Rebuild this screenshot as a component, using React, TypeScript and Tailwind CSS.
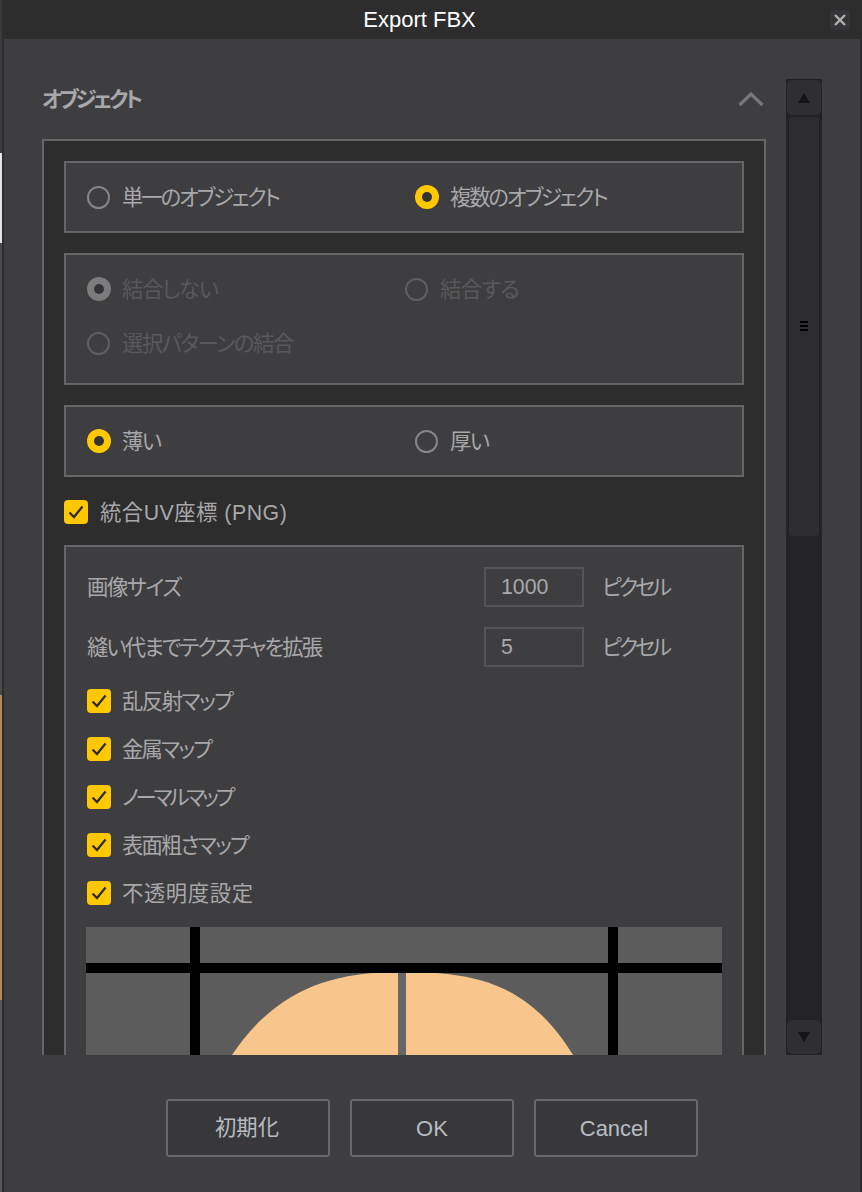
import React from "react";

const font = { fontFamily: '"Liberation Sans","Noto Sans CJK JP",sans-serif' };
const jp = "text-[21.33px] leading-[22px] pt-[2px] [font-feature-settings:'palt'] whitespace-nowrap";

function Radio({ on, dim, label, track, gap = "gap-[11px]" }: { on?: boolean; dim?: boolean; label: string; track: string; gap?: string }) {
  const ring = dim ? "border-[#5e5e60]" : "border-[#858587]";
  return (
    <div className={`flex items-center ${on ? gap : "gap-[12px]"}`}>
      {on ? (
        <span
          className={`w-[24px] h-[24px] rounded-full flex items-center justify-center ${dim ? "bg-[#7c7c7c]" : "bg-[#ffc800]"}`}
        >
          <span className="w-[10px] h-[10px] rounded-full bg-[#333335]" />
        </span>
      ) : (
        <span className={`w-[23px] h-[23px] rounded-full border-2 ${ring}`} />
      )}
      <span className={`${jp} ${track} ${dim ? "text-[#59595b]" : "text-[#a8a8aa]"}`}>{label}</span>
    </div>
  );
}

function Check({ label, track, gap = "gap-[11px]" }: { label: string; track: string; gap?: string }) {
  return (
    <div className={`flex items-center ${gap}`}>
      <span className="w-[24px] h-[24px] rounded-[4px] bg-[#ffc800] flex items-center justify-center shrink-0">
        <svg width="16" height="14" viewBox="0 0 16 14" fill="none">
          <path d="M1.5 7.5 L6 12 L14.5 1.5" stroke="#2b2b2b" strokeWidth="2.2" />
        </svg>
      </span>
      <span className={`${jp} ${track} text-[#a8a8aa]`}>{label}</span>
    </div>
  );
}

function Card({ children, className = "" }: { children: React.ReactNode; className?: string }) {
  return <div className={`border-2 border-[#666668] bg-[#3e3e40] ${className}`}>{children}</div>;
}

function SizeRow({ label, value, track }: { label: string; value: string; track: string }) {
  return (
    <div className="flex items-center h-[40px]">
      <span className={`w-[397px] ${jp} ${track} text-[#a8a8aa]`}>{label}</span>
      <div className="w-[100px] h-[40px] border-2 border-[#555557] flex items-center pl-[15px] pt-[2px] text-[21.33px] text-[#a8a8aa]">
        {value}
      </div>
      <span className={`ml-[18px] ${jp} tracking-[-3.1px] text-[#a8a8aa]`}>ピクセル</span>
    </div>
  );
}

function Btn({ label, size }: { label: string; size: string }) {
  return (
    <button className={`w-[164px] h-[58px] border-2 border-[#69696b] rounded-[3px] bg-[#38383a] ${size} text-[#b9bcc2]`}>
      {label}
    </button>
  );
}

export default function App() {
  return (
    <div className="w-[862px] h-[1192px] flex overflow-hidden bg-[#2d2d2d]" style={font}>
      <div className="w-[2px] flex flex-col shrink-0">
        <div className="h-[153px] bg-[#3a3a3a]" />
        <div className="h-[90px] bg-[#e4e4e4]" />
        <div className="h-[452px] bg-[#4a4a4a]" />
        <div className="h-[305px] bg-[#b08a5c]" />
        <div className="flex-1 bg-[#59595b]" />
      </div>
      <div className="flex-1 flex flex-col min-w-0">
        <div className="h-[39px] bg-[#2d2d2d] flex items-center shrink-0 relative">
          <div className="flex-1 pl-[8px] text-center text-white text-[22px] leading-[39px]">Export FBX</div>
          <div className="w-[22px] h-[22px] mr-[11px] rounded-[3px] border border-[#2a2a2c] bg-[#353537] flex items-center justify-center">
            <svg width="14" height="14" viewBox="0 0 14 14">
              <path d="M2 2 L12 12 M12 2 L2 12" stroke="#b0b0b0" strokeWidth="2.4" />
            </svg>
          </div>
        </div>
        <div className="flex-1 flex min-h-0 ml-[2px] mr-[2px] bg-[#3e3e40]">
          <div className="flex-1 flex flex-col min-w-0">
            <div className="flex-1 flex min-h-0">
              <div className="w-[724px] ml-[38px] flex flex-col">
                <div className="h-[100px] flex items-center justify-between shrink-0 pt-[20px]">
                  <span className="text-[21.33px] font-bold pt-[3px] text-[#a8a8aa] tracking-[-3.15px] [font-feature-settings:'palt']">オブジェクト</span>
                  <svg width="28" height="18" viewBox="0 0 28 18" className="mr-[1px]">
                    <path d="M2.5 15 L14 4 L25.5 15" fill="none" stroke="#77777a" strokeWidth="3.2" />
                  </svg>
                </div>
                <div className="flex-1 min-h-0 overflow-hidden border-x-2 border-t-2 border-[#666668] bg-[#2d2d2d] px-[20px] pt-[20px] flex flex-col">
                  <Card className="h-[72px] shrink-0 flex items-center pl-[21px]">
                    <div className="w-[328px]"><Radio label="単一のオブジェクト" track="tracking-[-2.08px]" /></div>
                    <Radio on label="複数のオブジェクト" track="tracking-[-2.1px]" />
                  </Card>
                  <Card className="h-[132px] shrink-0 mt-[20px] pl-[21px] pt-[22px] flex flex-col gap-[30px]">
                    <div className="flex items-center">
                      <div className="w-[318px]"><Radio on dim label="結合しない" track="tracking-[-1.2px]" /></div>
                      <Radio dim label="結合する" track="tracking-[-0.5px]" />
                    </div>
                    <Radio dim label="選択パターンの結合" track="tracking-[-1.4px]" />
                  </Card>
                  <Card className="h-[72px] shrink-0 mt-[20px] flex items-center pl-[21px]">
                    <div className="w-[328px]"><Radio on label="薄い" track="tracking-[-1.5px]" /></div>
                    <Radio label="厚い" track="tracking-[-1.5px]" />
                  </Card>
                  <div className="mt-[23px] mb-[21px] shrink-0">
                    <Check gap="gap-[12px]" label="統合UV座標 (PNG)" track="tracking-[0.5px]" />
                  </div>
                  <div className="border-x-2 border-t-2 border-[#666668] bg-[#3e3e40] pl-[21px] pr-[20px] pt-[20px] flex-1 min-h-0 flex flex-col">
                    <SizeRow label="画像サイズ" value="1000" track="tracking-[-1.4px]" />
                    <div className="mt-[20px]"><SizeRow label="縫い代までテクスチャを拡張" value="5" track="tracking-[-1.85px]" /></div>
                    <div className="mt-[22px] flex flex-col gap-[24px]">
                      <Check label="乱反射マップ" track="tracking-[-1.5px]" />
                      <Check label="金属マップ" track="tracking-[-1.8px]" />
                      <Check label="ノーマルマップ" track="tracking-[-3.15px]" />
                      <Check label="表面粗さマップ" track="tracking-[-1.8px]" />
                      <Check label="不透明度設定" track="tracking-[0.6px]" />
                    </div>
                    <svg width="636" height="128" viewBox="0 0 636 128" className="mt-[22px] -ml-[1px] shrink-0 block">
                      <rect width="636" height="128" fill="#5c5c5c" />
                      <path d="M146 128 C185 70 235 45 312 45 L312 128 Z" fill="#f8c58c" />
                      <path d="M320 45 C395 45 445 60 487 128 L320 128 Z" fill="#f8c58c" />
                      <rect x="312" y="45" width="8" height="83" fill="#666668" />
                      <rect x="0" y="36" width="636" height="10" fill="#000" />
                      <rect x="104" y="0" width="10" height="128" fill="#000" />
                      <rect x="522" y="0" width="10" height="128" fill="#000" />
                    </svg>
                  </div>
                </div>
              </div>
              <div className="w-[36px] ml-[20px] mt-[40px] bg-[#232325] flex flex-col items-center shrink-0">
                <div className="w-[34px] h-[35px] mt-[1px] rounded-[5px] bg-[#2f2f31] flex items-center justify-center shrink-0">
                  <svg width="12" height="10" viewBox="0 0 12 10"><path d="M6 0 L12 10 L0 10 Z" fill="#141416" /></svg>
                </div>
                <div className="w-[30px] h-[419px] mt-[2px] rounded-[2px] bg-[#2d2d2f] flex justify-center pt-[204px] shrink-0">
                  <div className="w-[8px] h-[12px] flex flex-col gap-[2px]">
                    <span className="h-[2px] bg-black" />
                    <span className="h-[2px] bg-black" />
                    <span className="h-[2px] bg-black" />
                  </div>
                </div>
                <div className="flex-1" />
                <div className="w-[34px] h-[34px] mb-[1px] rounded-[5px] bg-[#2f2f31] flex items-center justify-center shrink-0">
                  <svg width="12" height="10" viewBox="0 0 12 10"><path d="M0 0 L12 0 L6 10 Z" fill="#141416" /></svg>
                </div>
              </div>
            </div>
            <div className="h-[137px] shrink-0 flex justify-start gap-[20px] pl-[162px] pt-[44px]">
              <Btn label="初期化" size="text-[21.33px] pr-[2px] pt-[2px]" />
              <Btn label="OK" size="text-[22px]" />
              <Btn label="Cancel" size="text-[22px] pr-[4px]" />
            </div>
          </div>
        </div>
      </div>
    </div>
  );
}
